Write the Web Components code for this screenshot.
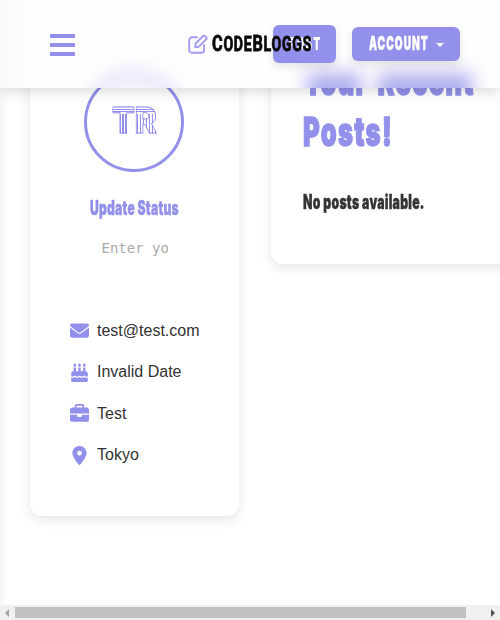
<!DOCTYPE html>
<html lang="en"><head><meta charset="utf-8"><title>CodeBloggs</title>
<style>
html,body{margin:0;height:100%;overflow:hidden;background:#fff}
body{font-family:"Liberation Sans",Arial,sans-serif;color:#333;--accent:#9290ea}
</style></head><body>
<blog-app></blog-app>
<script>
function define(name, html, init) {
  const t = document.createElement('template');
  t.innerHTML = html;
  customElements.define(name, class extends HTMLElement {
    connectedCallback() {
      if (this.shadowRoot) return;
      this.attachShadow({mode: 'open'}).append(t.content.cloneNode(true));
      if (init) init.call(this, this.shadowRoot);
    }
  });
}

/* Condensed heading text: squeezed horizontally to the width in the w attribute. */
define('fit-text', `<style>
:host{display:block;font-family:Inter,"Liberation Sans",sans-serif;font-weight:900;white-space:nowrap}
span{display:inline-block;transform-origin:0 50%}</style><span><slot></slot></span>`, function (r) {
  const s = r.querySelector('span'), w = +this.getAttribute('w');
  this.style.width = w + 'px';
  s.style.transform = 'scaleX(' + w / s.offsetWidth + ')';
});

const icons = {
  mail: ['0 0 512 512', 'M48 64C21.5 64 0 85.5 0 112c0 15.1 7.1 29.3 19.2 38.4L236.8 313.6c11.4 8.5 27 8.5 38.4 0L492.8 150.4c12.1-9.1 19.2-23.3 19.2-38.4c0-26.5-21.5-48-48-48H48zM0 176V384c0 35.3 28.7 64 64 64H448c35.3 0 64-28.7 64-64V176L294.4 339.2c-22.8 17.1-54 17.1-76.8 0L0 176z'],
  cake: ['0 0 448 512', 'M96 0L61.8 47.6C40 90 70 100 96 100s56-10 34.2-52.4zM224 0l-34.2 47.6C168 90 198 100 224 100s56-10 34.2-52.4zM352 0l-34.2 47.6C296 90 326 100 352 100s56-10 34.2-52.4zM128 124H64v100c-35.3 0-64 28.7-64 64v71c24 14 47 10 70-6l26-19 26 19c24 18 52 18 76 0l26-19 26 19c24 18 52 18 76 0l26-19 26 19c24 16 47 20 70 6v-71c0-35.3-28.7-64-64-64V124h-64v100h-64V124h-64v100h-64zM448 394c-30 12-62 6-96-20-40 32-88 32-128 0-40 32-88 32-128 0-34 26-66 32-96 20v86c0 17.7 14.3 32 32 32h384c17.7 0 32-14.3 32-32z'],
  work: ['0 0 512 512', 'M184 48H328c4.4 0 8 3.6 8 8V96H176V56c0-4.4 3.6-8 8-8zm-56 8V96H64C28.7 96 0 124.7 0 160v96H192 320 512V160c0-35.3-28.7-64-64-64H384V56c0-30.9-25.1-56-56-56H184c-30.9 0-56 25.1-56 56zM512 288H320v32c0 17.7-14.3 32-32 32H224c-17.7 0-32-14.3-32-32V288H0V416c0 35.3 28.7 64 64 64H448c35.3 0 64-28.7 64-64V288z'],
  pin: ['0 0 384 512', 'M215.7 499.2C267 435 384 279.4 384 192C384 86 298 0 192 0S0 86 0 192c0 87.4 117 243 168.3 307.2c12.3 15.3 35.1 15.3 47.4 0zM192 128a64 64 0 1 1 0 128 64 64 0 1 1 0-128z']
};
define('info-row', `<style>
:host{display:flex;align-items:center;gap:8px;height:41.5px;font-size:16px;line-height:24px}
svg{width:19px;height:19px;fill:var(--accent)}</style><svg><path/></svg><slot></slot>`, function (r) {
  const [box, d] = icons[this.getAttribute('icon')];
  r.querySelector('svg').setAttribute('viewBox', box);
  r.querySelector('path').setAttribute('d', d);
});

define('user-avatar', `<style>
:host{display:flex;justify-content:center;box-sizing:border-box;width:100px;height:100px;border:3px solid var(--accent);border-radius:50%}
fit-text{font-size:36px;line-height:90px;height:90px}
b{font-weight:900;color:transparent;-webkit-text-stroke:.8px var(--accent);-webkit-background-clip:text;background-clip:text;
background-image:repeating-linear-gradient(to bottom,#fff 0 1.5px,var(--accent) 1.5px 2.5px),repeating-linear-gradient(to right,#fff 0 1.7px,var(--accent) 1.7px 3.2px);
background-size:100% 7px,auto;background-position:0 9px,0 0;background-repeat:no-repeat,repeat}
</style><fit-text w="45"><b>TR</b></fit-text>`);

define('profile-card', `<style>
:host{display:flex;flex:none;flex-direction:column;align-items:center;box-sizing:border-box;width:209px;height:476px;padding:32px 1px 0 0;background:#fff;border-radius:12px;box-shadow:0 4px 12px rgba(0,0,0,.1)}
.status{font-size:19.5px;line-height:24px;color:var(--accent);margin-top:24px;-webkit-text-stroke:.4px var(--accent);letter-spacing:.4px}
.entry{width:66px;height:24px;margin-top:16px;overflow:hidden;white-space:nowrap;font:14px/24px "DejaVu Sans Mono",monospace;color:#aaa;position:relative;left:.5px}
.info{align-self:stretch;padding-left:40px;margin-top:50px}
</style><user-avatar></user-avatar><fit-text class="status" w="89">Update Status</fit-text>
<div class="entry">Enter yo</div>
<div class="info"><info-row icon="mail">test@test.com</info-row><info-row icon="cake">Invalid Date</info-row><info-row icon="work">Test</info-row><info-row icon="pin">Tokyo</info-row></div>`);

define('posts-card', `<style>
:host{display:block;box-sizing:border-box;flex:none;width:260px;height:242px;margin-top:-18px;padding:33px 32px;background:#fff;border-radius:12px;box-shadow:0 4px 12px rgba(0,0,0,.1)}
.t{font-size:40px;line-height:51px;height:51px;color:var(--accent);letter-spacing:2px;word-spacing:5px;-webkit-text-stroke:1.4px var(--accent)}
.n{font-size:19.5px;line-height:24px;margin-top:33px;letter-spacing:.4px;-webkit-text-stroke:.4px #333}
</style><fit-text class="t" w="172">Your Recent</fit-text><fit-text class="t" w="90">Posts!</fit-text><fit-text class="n" w="122">No posts available.</fit-text>`);

define('nav-button', `<style>
:host{display:flex;position:relative;align-items:center;box-sizing:border-box;background:var(--accent);color:#fff;border-radius:6px;box-shadow:0 4px 8px rgba(0,0,0,.1)}
</style><slot></slot>`);

define('brand-logo', `<style>
:host{position:absolute;left:188px;top:32px;display:flex;gap:4px;align-items:center;height:24px;color:#0a0a0a}
svg{width:20px;height:20px;fill:none;stroke:#a39bf3;stroke-width:1.9;stroke-linejoin:round;stroke-linecap:round}
fit-text{font:700 22.5px/24px Roboto,sans-serif;-webkit-text-stroke:.8px #0a0a0a;letter-spacing:1px}
i{font-style:normal;font-size:19.5px;text-transform:uppercase}
</style><svg viewBox="0 0 20 20"><path d="M9 3.3H4a2.8 2.8 0 0 0-2.8 2.8v9.8A2.8 2.8 0 0 0 4 18.7h9.3a2.8 2.8 0 0 0 2.8-2.8V11M7.6 9.5l7.5-7.5a1.3 1.3 0 0 1 1.9 0l1.3 1.3a1.3 1.3 0 0 1 0 1.9l-7.5 7.5-3.6.5z"/></svg><fit-text w="100">C<i>ode</i>B<i>loggs</i></fit-text>`);

/* The glows are the frosted look of the avatar ring and the heading under the bar. */
define('top-bar', `<style>
:host{position:absolute;inset:0 0 auto;box-sizing:border-box;height:88px;padding:0 40px 0 50px;display:flex;align-items:center;background:linear-gradient(to right,#fafafa,#fefefe 35px);box-shadow:0 4px 12px rgba(0,0,0,.14);overflow:hidden}
.glow{position:absolute;box-sizing:border-box}
.ring{left:86px;top:74px;width:96px;height:96px;border-radius:50%;border:4px solid var(--accent);filter:blur(9px);opacity:.8}
.w1{left:307px;top:73px;width:54px;height:50px;background:var(--accent);filter:blur(9px);opacity:.72}
.w2{left:378px;top:73px;width:94px;height:50px;background:var(--accent);filter:blur(9px);opacity:.72}
.menu{position:relative;display:grid;gap:5px;margin-right:auto;padding-top:2px}
.menu i{width:25px;height:4px;border-radius:.5px;background:var(--accent)}
.post{width:63px;height:38px;padding-left:16px;margin-right:16px}
.acct{width:108px;height:34px;padding-left:17px;gap:7px}
.post fit-text{font-size:17px;line-height:38px;letter-spacing:1.5px}.acct fit-text{font-size:19px;line-height:34px;letter-spacing:2px;-webkit-text-stroke:.4px #fff}
.caret{border:4.5px solid transparent;border-top-color:#fff;border-bottom:0;margin-top:2px}
</style><div class="glow ring"></div><div class="glow w1"></div><div class="glow w2"></div><div class="menu"><i></i><i></i><i></i></div>
<nav-button class="post"><fit-text w="32">POST</fit-text></nav-button>
<nav-button class="acct"><fit-text w="60">ACCOUNT</fit-text><span class="caret"></span></nav-button>
<brand-logo></brand-logo>`);

define('scroll-bar', `<style>
:host{display:flex;align-items:center;height:15px;background:#f0f0f0}
.thumb{width:451px;height:11px;background:#c1c1c1;margin-right:auto}
.l,.r{border:4px solid transparent}
.l{border-left:0;border-right-color:#a3a3a3;margin:0 6px 0 5px}.r{border-right:0;border-left-color:#505050;margin-right:5px}
</style><span class="l"></span><span class="thumb"></span><span class="r"></span>`);

define('blog-app', `<style>
:host{display:flex;flex-direction:column;height:620px;width:500px;overflow:hidden;position:relative;background:#fff}
main{flex:1;min-height:0;display:flex;align-items:flex-start;gap:32px;padding:40px 0 0 30px;overflow:hidden;box-sizing:border-box;box-shadow:inset 8px 0 8px -6px rgba(0,0,0,.06)}
</style><main><profile-card></profile-card><posts-card></posts-card></main><scroll-bar></scroll-bar><top-bar></top-bar>`);
</script></body></html>
